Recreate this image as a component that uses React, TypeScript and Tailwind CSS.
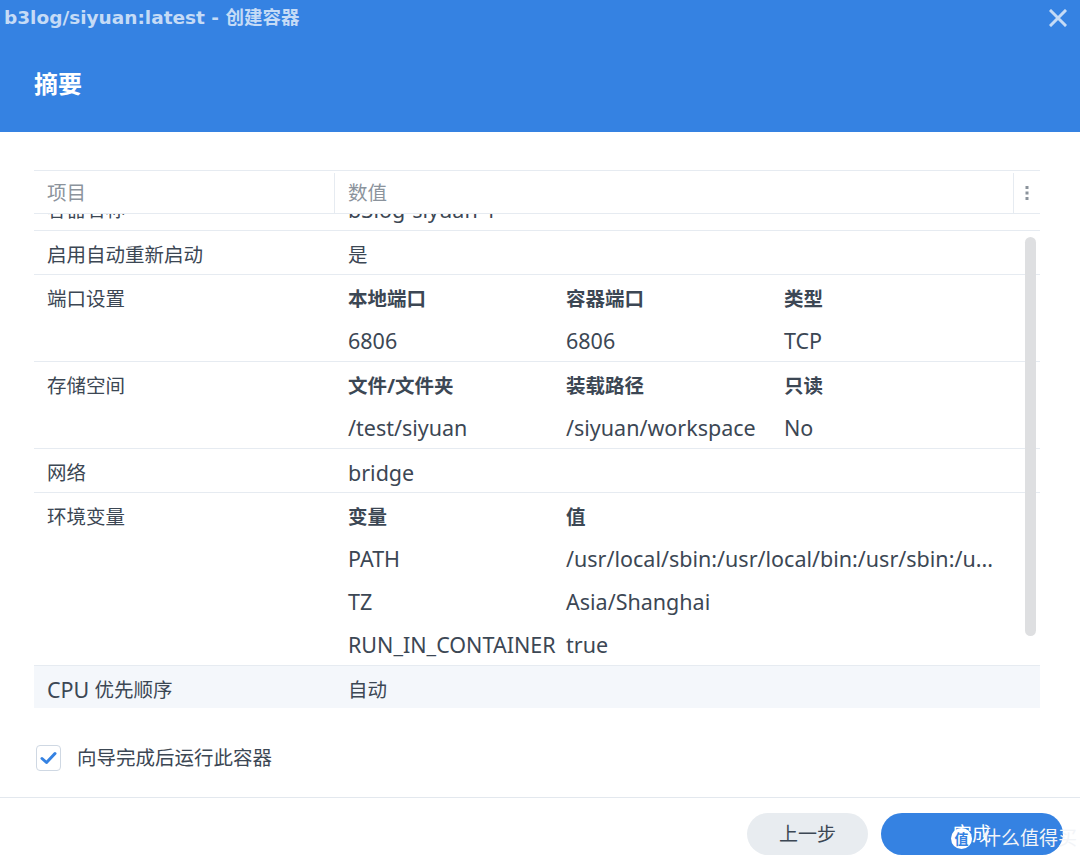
import React from "react";

const font = { fontFamily: '"Noto Sans", "Noto Sans CJK SC", sans-serif' };

function L({ children }: { children: React.ReactNode }) {
  return <span className="text-[21.5px] leading-none">{children}</span>;
}

function Row({ label, children, className = "" }: { label: React.ReactNode; children: React.ReactNode; className?: string }) {
  return (
    <div className={`flex border-t border-[#e6ebf1] ${className}`}>
      <div className="w-[301px] shrink-0 pl-[13px] pt-[4px] h-[43px] flex items-center">{label}</div>
      <div className="flex-1 pl-[13px]">{children}</div>
    </div>
  );
}

function Line({ cols, bold = false }: { cols: React.ReactNode[]; bold?: boolean }) {
  return (
    <div className={`flex h-[43px] pt-[4px] items-center ${bold ? "font-bold" : ""}`}>
      {cols.map((c, i) => (
        <div key={i} className={i === cols.length - 1 && cols.length === 2 ? "flex-1 whitespace-nowrap" : "w-[218px] shrink-0 whitespace-nowrap"}>
          {c}
        </div>
      ))}
    </div>
  );
}

export default function App() {
  return (
    <div className="w-[1080px] h-[861px] bg-white relative overflow-hidden text-[19.5px] text-[#3c4754]" style={font}>
      {/* Header */}
      <div className="bg-[#3582e2] h-[132px] flex flex-col">
        <div className="h-[36px] flex items-center justify-between pl-[4px] pr-[12px]">
          <div className="text-[18.5px] font-bold text-[#c5dbf6]" style={{ fontFamily: '"DejaVu Sans", "Noto Sans CJK SC", sans-serif' }}>
            b3log/siyuan:latest - 创建容器
          </div>
          <svg width="18" height="18" viewBox="0 0 18 18" className="mr-[1px]">
            <path d="M2 2 L16 16 M16 2 L2 16" stroke="#c5dbf6" strokeWidth="3" strokeLinecap="square" />
          </svg>
        </div>
        <div className="pl-[34px] mt-[36px] text-[24px] font-bold text-white leading-none">摘要</div>
      </div>

      {/* Table */}
      <div className="mx-[34px] mt-[38px] w-[1006px]">
        <div className="flex h-[44px] pt-[2px] border-t border-b border-[#e6ebf1] text-[#8b939c]">
          <div className="w-[301px] shrink-0 pl-[13px] flex items-center border-r border-[#e6ebf1]">项目</div>
          <div className="flex-1 pl-[13px] flex items-center border-r border-[#e6ebf1]">数值</div>
          <div className="w-[26px] flex items-center justify-center">
            <svg width="4" height="16" viewBox="0 0 4 16">
              <rect x="0.5" y="1" width="3" height="3" fill="#8b939c" />
              <rect x="0.5" y="6.5" width="3" height="3" fill="#8b939c" />
              <rect x="0.5" y="12" width="3" height="3" fill="#8b939c" />
            </svg>
          </div>
        </div>
        <div className="relative h-[494px] overflow-hidden">
          <div className="mt-[-28px]">
            <div className="flex">
              <div className="w-[301px] shrink-0 pl-[13px] pt-[4px] h-[44px] flex items-center">容器名称</div>
              <div className="flex-1 pl-[13px] pt-[4px] h-[44px] flex items-center"><L>b3log-siyuan-1</L></div>
            </div>
            <Row label="启用自动重新启动">
              <div className="h-[43px] pt-[4px] flex items-center">是</div>
            </Row>
            <Row label="端口设置">
              <Line cols={["本地端口", "容器端口", "类型"]} bold />
              <Line cols={[<L>6806</L>, <L>6806</L>, <L>TCP</L>]} />
            </Row>
            <Row label="存储空间">
              <Line cols={["文件/文件夹", "装载路径", "只读"]} bold />
              <Line cols={[<L>/test/siyuan</L>, <L>/siyuan/workspace</L>, <L>No</L>]} />
            </Row>
            <Row label="网络">
              <div className="h-[43px] pt-[4px] flex items-center"><L>bridge</L></div>
            </Row>
            <Row label="环境变量">
              <Line cols={["变量", "值"]} bold />
              <Line cols={[<L>PATH</L>, <L>/usr/local/sbin:/usr/local/bin:/usr/sbin:/u...</L>]} />
              <Line cols={[<L>TZ</L>, <L>Asia/Shanghai</L>]} />
              <Line cols={[<L>RUN_IN_CONTAINER</L>, <L>true</L>]} />
            </Row>
            <Row label={<><L>CPU</L>&nbsp;优先顺序</>} className="bg-[#f4f7fb]">
              <div className="h-[43px] pt-[4px] flex items-center">自动</div>
            </Row>
          </div>
          <div className="absolute right-[4px] top-[23px] w-[11px] h-[399px] rounded-full bg-[#dedfe1]" />
        </div>
      </div>

      {/* Checkbox */}
      <div className="flex items-center mt-[37px] ml-[36px] h-[26px]">
        <div className="w-[25px] h-[26px] rounded-[4px] border border-[#cfd8e3] bg-white flex items-center justify-center">
          <svg width="17" height="14" viewBox="0 0 17 14">
            <path d="M2 7.5 L6.5 11.5 L15 2.5" stroke="#3582e2" strokeWidth="3" fill="none" strokeLinecap="round" strokeLinejoin="round" />
          </svg>
        </div>
        <div className="ml-[16px]">向导完成后运行此容器</div>
      </div>

      {/* Footer */}
      <div className="absolute left-0 right-0 top-[797px] border-t border-[#e3e8ee] h-[64px]">
        <div className="flex justify-end gap-[13px] pr-[17px] pt-[15px]">
          <button className="w-[121px] h-[42px] rounded-full bg-[#e8ecf0] text-[#3c4754] text-[19px]">上一步</button>
          <button className="w-[182px] h-[42px] rounded-full bg-[#3582e2] text-white text-[19px]">完成</button>
        </div>
      </div>
      {/* watermark overlay */}
      <div className="absolute left-[951px] top-[824px] flex items-center text-[19px]">
        <div className="w-[21px] h-[21px] rounded-full bg-white text-[#3582e2] text-[14px] font-bold flex items-center justify-center">值</div>
        <span className="ml-[10px] text-[#f2f4f7]">什么值得买</span>
      </div>
    </div>
  );
}
